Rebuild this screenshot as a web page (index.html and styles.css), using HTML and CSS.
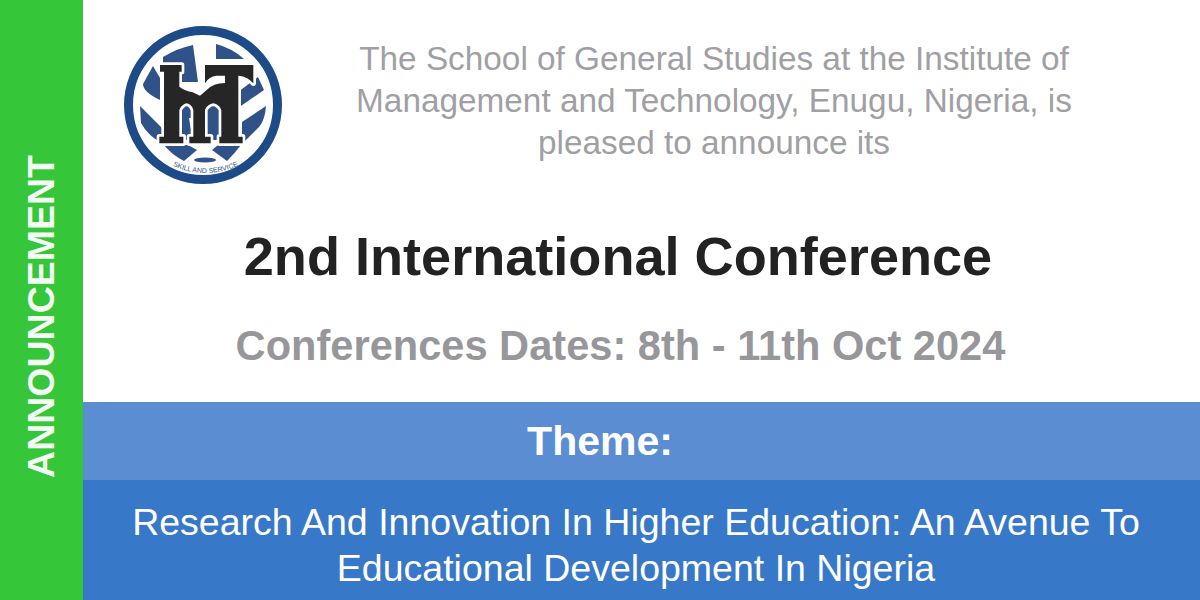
FILE: index.html
```
<!DOCTYPE html>
<html lang="en">
<head>
<meta charset="utf-8">
<title>2nd International Conference</title>
<link rel="stylesheet" href="styles.css">
</head>
<body>
<div class="banner">
  <aside class="side"><span class="side-label">ANNOUNCEMENT</span></aside>
  <main class="main">
    <section class="top">
      <header class="head">
        <svg class="logo" viewBox="110 15 190 180" aria-label="IMT logo">
          <defs>
            <path id="arc" d="M171 165Q205 181 240 165"/>
            <path id="mark" d="M30 30H95V50H88V95Q105 108 128 112L150 122L170 105Q190 84 225 84V62H200Q175 65 165 85V30H310V85Q295 65 265 62V245H278V265H208V245H214V165Q207 148 190 145Q172 148 165 165V245H182V265H118V245H130V165Q125 148 110 145Q95 148 88 165V245H100V265H28V245H42V50H30Z"/>
          </defs>
          <g fill="#2f5389">
            <path d="M163 57Q178 48 193 45L198 82H163Z"/>
            <path d="M216 44Q232 48 244 59H216Z"/>
            <path d="M153 66L143 84Q143 92 160 100V78Z"/>
            <path d="M140 106L162 128V143Q148 136 141 123Z"/>
            <path d="M258 77L264 90L238 108V92Z"/>
            <path d="M266 106Q265 120 259 127L242 144V122Z"/>
            <path d="M164 145H188L197 150L184 161Q172 155 164 145Z"/>
            <path d="M212 150L218 145H241Q235 153 227 161Z"/>
            <path d="M180 100H232V140H180Z"/>
          </g>
          <path d="M190 118L194 142" stroke="#fff" stroke-width="2"/>
          <circle class="ring" cx="203" cy="105" r="74.5"/>
          <g transform="translate(150 55) scale(.3333)">
            <use href="#mark" class="mark-halo"/>
            <use href="#mark" class="mark-fill"/>
          </g>
          <ellipse cx="205" cy="160" rx="11" ry="2.5" fill="#2f5389"/>
          <text class="logo-text"><textPath href="#arc" startOffset="50%" text-anchor="middle">SKILL AND SERVICE</textPath></text>
        </svg>
        <p class="intro">The School of General Studies at the Institute of Management and Technology, Enugu, Nigeria, is pleased to announce its</p>
      </header>
      <h1 class="title">2nd International Conference</h1>
      <p class="dates">Conferences Dates: 8th - 11th Oct 2024</p>
    </section>
    <section class="theme">Theme:</section>
    <section class="subject">Research And Innovation In Higher Education: An Avenue To Educational Development In Nigeria</section>
  </main>
</div>
</body>
</html>
```
FILE: styles.css
```
* { box-sizing: border-box; }
html, body { margin: 0; padding: 0; }
body { font-family: "Liberation Sans", Arial, sans-serif; background: #fff; overflow: hidden; }
.banner { display: flex; width: 1200px; height: 600px; }
.side { flex: 0 0 83px; background: #36c63a; display: flex; align-items: center; justify-content: center; padding-top: 32px; }
.side-label { writing-mode: vertical-rl; transform: rotate(180deg); color: #f4fbf4; font-size: 37.5px; font-weight: 700; line-height: 1; }
.main { flex: 1; display: flex; flex-direction: column; }
.top { height: 402px; flex: none; }
.head { display: flex; height: 195px; padding: 15px 0 0 27px; }
.logo { width: 190px; height: 180px; flex: none; }
.ring { fill: none; stroke: #1c4b88; stroke-width: 9; }
.mark-halo { fill: none; stroke: #fff; stroke-width: 16; stroke-linejoin: round; }
.mark-fill { fill: #262626; }
.logo-text { font-family: "Liberation Sans", Arial, sans-serif; font-size: 7px; fill: #2f5389; }
.intro { margin: 23px 0 0 44px; width: 740px; text-align: center; color: #a0a0a4; font-size: 33.35px; line-height: 42px; }
.title { margin: 29px 0 0; padding-right: 47px; text-align: center; color: #222; font-size: 54.1px; font-weight: 700; line-height: 64px; }
.dates { margin: 36px 0 0; padding-right: 42px; text-align: center; color: #97979b; font-size: 41.6px; font-weight: 700; line-height: 44px; }
.theme { height: 78px; flex: none; background: #5a8dd2; color: #fff; font-size: 41px; font-weight: 700; display: flex; align-items: center; justify-content: center; padding-right: 83px; }
.subject { flex: 1; background: #3878c8; color: #fff; font-size: 37.5px; line-height: 46px; text-align: center; padding: 19px 51px 0 40px; }
```
